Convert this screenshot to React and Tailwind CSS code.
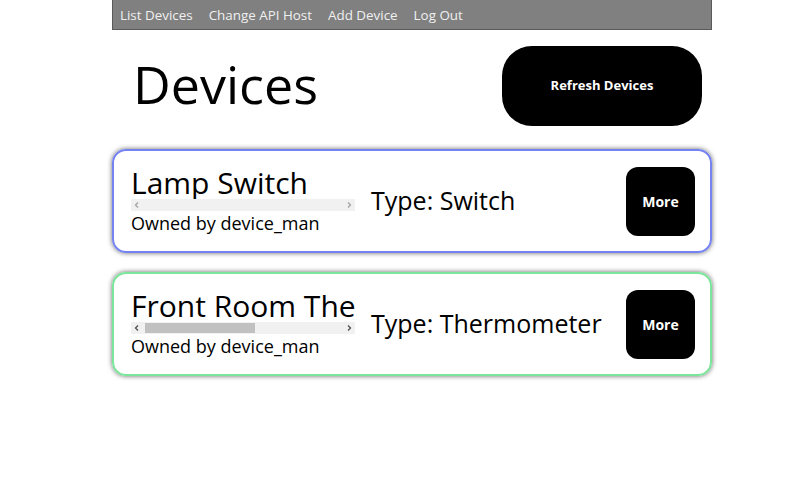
import React from 'react';

const devices = [
	{ id: 1, name: 'Lamp Switch', owner: 'device_man', type: 'Switch', border: 'border-[#7482f2]', scroll: false },
	{ id: 2, name: 'Front Room Thermometer', owner: 'device_man', type: 'Thermometer', border: 'border-[#7be59b]', scroll: true }
];

// classic scrollbar look, drawn by hand since the headless browser hides real ones
const FakeScrollbar = ({ active }) => {
	const arrow = active ? '#505050' : '#a3a3a3';
	return (
		<div className="relative h-[12px] w-full bg-[#f1f1f1]">
			<svg className="absolute left-[3px] top-[3px]" width="6" height="6" viewBox="0 0 6 6">
				<polyline points="4,0.5 1.5,3 4,5.5" fill="none" stroke={arrow} strokeWidth="1.3" />
			</svg>
			{active && <div className="absolute left-[14px] top-[1px] h-[10px] w-[110px] bg-[#c1c1c1]" />}
			<svg className="absolute right-[3px] top-[3px]" width="6" height="6" viewBox="0 0 6 6">
				<polyline points="2,0.5 4.5,3 2,5.5" fill="none" stroke={arrow} strokeWidth="1.3" />
			</svg>
		</div>
	);
};

const App = () => {
	return (
		<div className="min-h-screen bg-white font-['Open_Sans',sans-serif] text-black">
			<div className="w-[600px] ml-[112px]">
				{/* nav */}
				<div className="h-[30px] bg-[#808080] border border-[#5a5a5a] border-t-0 flex items-center gap-4 px-[7px] pt-[1px] text-[13.4px] text-[#f0f0f0]">
					<span>List Devices</span>
					<span>Change API Host</span>
					<span>Add Device</span>
					<span>Log Out</span>
				</div>

				<div className="flex items-center justify-between pl-[21px] pr-[10px] mt-4 mb-[23px]">
					<h1 className="text-[52px] leading-none -mt-1">Devices</h1>
					<button className="w-[200px] h-[80px] rounded-[30px] bg-black text-white text-[13px] font-bold">Refresh Devices</button>
				</div>

				<div className="flex flex-col gap-[19px]">
					{devices.map((d) => (
						<div key={d.id} className={`h-[104px] rounded-[14px] border-2 ${d.border} shadow-[0_0_5px_rgba(0,0,0,0.6)] flex items-center pl-[17px] pr-[15px]`}>
							<div className="w-[224px] flex flex-col">
								<div className="overflow-hidden whitespace-nowrap text-[30px] leading-[33px]">{d.name}</div>
								<FakeScrollbar active={d.scroll} />
								<div className="text-[18px] leading-[25px]">Owned by {d.owner}</div>
							</div>
							<div className="ml-4 text-[25px] flex-1">Type: {d.type}</div>
							<button className="w-[69px] h-[69px] rounded-[12px] bg-black text-white text-[14px] font-bold">More</button>
						</div>
					))}
				</div>
			</div>
		</div>
	);
};

export default App;
